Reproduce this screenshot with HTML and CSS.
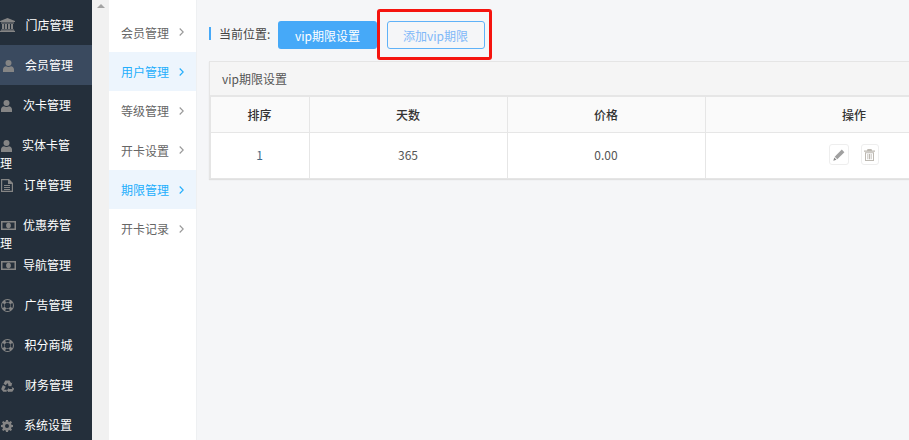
FILE: index.html
```html
<!DOCTYPE html>
<html lang="zh-CN">
<head>
<meta charset="utf-8">
<title>vip期限设置</title>
<link rel="stylesheet" href="styles.css">
</head>
<body>
<svg class="defs" width="0" height="0" aria-hidden="true">
  <symbol id="i-bank" viewBox="0 0 15 14"><path d="M7.500 0 15 3v1H0V3zM1 4.600h13v.9H1zM2 6h2.200v5H2zM5 6h2v5H5zM8 6h2v5H8zM11 6h2v5h-2zM1 11.500h13v1H1zM0 12.800h15V14H0z"/></symbol>
  <symbol id="i-user" viewBox="0 0 11 12"><circle cx="5.500" cy="3" r="3"/><path d="M0 12V9.500C0 7.500 1.500 6.300 3 6.200c.7.500 1.500.8 2.500.8s1.800-.3 2.500-.8c1.500.1 3 1.300 3 3.300V12z"/></symbol>
  <symbol id="i-file" viewBox="0 0 12 13"><path fill-rule="evenodd" d="M0 0h8l4 4v9H0zM1.200 1.200v10.600h9.600V5H7V1.200zM3 6h6v1H3zM3 8h6v1H3zM3 10h6v.9H3z"/></symbol>
  <symbol id="i-money" viewBox="0 0 15 9"><path fill-rule="evenodd" d="M0 0h15v9H0zM1.500 1.500v6h12v-6zM7.500 1.800a2.400 2.700 0 1 1 0 5.400 2.400 2.700 0 0 1 0-5.400z"/></symbol>
  <symbol id="i-ring" viewBox="0 0 14 14"><path fill-rule="evenodd" d="M7 0a7 7 0 1 1 0 14A7 7 0 0 1 7 0zM7 4a3 3 0 1 0 0 6 3 3 0 0 0 0-6zM4.400 1.600 5.500 3.700a3.600 3.600 0 0 1 3 0l1.100-2.100a6 6 0 0 0-5.200 0zM1.600 4.400a6 6 0 0 0 0 5.200l2.100-1.100a3.600 3.600 0 0 1 0-3zM12.400 4.400l-2.100 1.100a3.600 3.600 0 0 1 0 3l2.100 1.100a6 6 0 0 0 0-5.200zM5.500 10.300l-1.100 2.100a6 6 0 0 0 5.200 0l-1.100-2.100a3.600 3.600 0 0 1-3 0z"/></symbol>
  <symbol id="i-recycle" viewBox="0 0 13 12"><path d="M4.300.5h4.200l1.700 2.700 1.100-.6L10.400 6.300 6.700 5.900l1-.6L6.300 2.900 4.900 5.300 2.500 3.800zM1.900 5l2.900 1.700L4.300 7.600 3 9.700h2.700v2H2.200L.4 9.300l-.4.200zM10.700 6.900l2.200 1.300L13 9.300l-1.700 2.400H7.900v1L6 10.200l1.900-2.500v1.400h3.300z"/></symbol>
  <symbol id="i-cog" viewBox="0 0 12 12"><path fill-rule="evenodd" d="M5 0h2l.3 1.600 1 .4L9.700 1 11 2.300l-1 1.400.4 1L12 5v2l-1.600.3-.4 1 1 1.400L9.700 11l-1.400-1-1 .4L7 12H5l-.3-1.600-1-.4-1.400 1L1 9.700l1-1.400-.4-1L0 7V5l1.600-.3.4-1-1-1.400L2.300 1l1.400 1 1-.4zM6 4a2 2 0 1 0 0 4 2 2 0 0 0 0-4z"/></symbol>
  <symbol id="i-chev" viewBox="0 0 5 8"><path d="M.7.500 4.200 4 .7 7.500" fill="none" stroke="currentColor" stroke-width="1.100"/></symbol>
</svg>

<div class="app">
  <nav class="side">
    <a class="side-item"><svg class="ic ic-bank"><use href="#i-bank"/></svg><span class="t t-11">门店管理</span></a>
    <a class="side-item active"><svg class="ic ic-user in-3"><use href="#i-user"/></svg><span class="t t-12">会员管理</span></a>
    <a class="side-item"><svg class="ic ic-user"><use href="#i-user"/></svg><span class="t t-12">次卡管理</span></a>
    <a class="side-item"><svg class="ic ic-user"><use href="#i-user"/></svg><span class="t t-10">实体卡管理</span></a>
    <a class="side-item"><svg class="ic ic-file"><use href="#i-file"/></svg><span class="t t-11">订单管理</span></a>
    <a class="side-item"><svg class="ic ic-money"><use href="#i-money"/></svg><span class="t t-7">优惠券管理</span></a>
    <a class="side-item"><svg class="ic ic-money"><use href="#i-money"/></svg><span class="t t-7">导航管理</span></a>
    <a class="side-item"><svg class="ic ic-ring"><use href="#i-ring"/></svg><span class="t t-11">广告管理</span></a>
    <a class="side-item"><svg class="ic ic-ring"><use href="#i-ring"/></svg><span class="t t-11">积分商城</span></a>
    <a class="side-item"><svg class="ic ic-recycle"><use href="#i-recycle"/></svg><span class="t t-12">财务管理</span></a>
    <a class="side-item"><svg class="ic ic-cog"><use href="#i-cog"/></svg><span class="t t-12">系统设置</span></a>
  </nav>
  <div class="scroll"><span class="scroll-up"></span></div>
  <aside class="sub">
    <a class="sub-item">会员管理<svg class="chev"><use href="#i-chev"/></svg></a>
    <a class="sub-item on">用户管理<svg class="chev"><use href="#i-chev"/></svg></a>
    <a class="sub-item">等级管理<svg class="chev"><use href="#i-chev"/></svg></a>
    <a class="sub-item">开卡设置<svg class="chev"><use href="#i-chev"/></svg></a>
    <a class="sub-item on">期限管理<svg class="chev"><use href="#i-chev"/></svg></a>
    <a class="sub-item">开卡记录<svg class="chev"><use href="#i-chev"/></svg></a>
  </aside>
  <main class="main">
    <div class="crumb">
      <span class="crumb-label">当前位置:</span>
      <a class="btn btn-fill">vip期限设置</a>
      <a class="btn btn-line">添加vip期限</a>
      <span class="mark"></span>
    </div>
    <section class="panel">
      <div class="panel-head">vip期限设置</div>
      <table class="tbl">
        <thead>
          <tr><th class="c1">排序</th><th class="c2">天数</th><th class="c3">价格</th><th class="c4">操作</th></tr>
        </thead>
        <tbody>
          <tr>
            <td class="num">1</td><td>365</td><td>0.00</td>
            <td class="ops">
              <span class="op op-edit"><svg width="12" height="12" viewBox="0 0 12 12"><path fill="#a0a0a0" d="M8.800.6 11.400 3.200 4.300 10.300 1.700 7.700z"/><path fill="#8a8a8a" d="M1.300 8.500 3.500 10.700.3 11.700z"/></svg></span>
              <span class="op op-del"><svg width="11" height="12" viewBox="0 0 11 12"><path fill="#bdb9b2" fill-rule="evenodd" d="M3.500 0h4l.5 1.500h3v1.200H0V1.500h3zM1 3.300h9V12H1zM2 4.300v6.700h7V4.300zM3.400 5h.9v5.200h-.9zM5 5h1v5.200H5zM6.700 5h.9v5.200h-.9z"/></svg></span>
            </td>
          </tr>
        </tbody>
      </table>
    </section>
  </main>
</div>
</body>
</html>
```
FILE: styles.css
```css
* { box-sizing: border-box; }
html, body { margin: 0; height: 100%; overflow: hidden; }
body { font-family: "Noto Sans CJK SC", "Noto Sans", sans-serif; font-size: 12px; background: #f5f6f8; }
.defs { position: absolute; }
.app { display: flex; width: 909px; height: 440px; overflow: hidden; }

.side { flex: 0 0 92px; height: 440px; padding-top: 5px; background: #242f3b; color: #fff; overflow: hidden; }
.side-item { display: block; height: 40px; padding: 11px 12px 0 0; line-height: 17.500px; }
.side-item.active { background: #3a4a5f; }
.ic { display: inline-block; vertical-align: -2px; fill: #858585; }
.ic-bank { width: 15px; height: 14px; }
.ic-user { width: 11px; height: 12px; margin-left: 1px; }
.ic-user.in-3 { margin-left: 3px; }
.ic-file { width: 12px; height: 13px; margin-left: 1px; }
.ic-money { width: 15px; height: 9px; margin-left: 1px; vertical-align: 0; }
.ic-ring { width: 13px; height: 13px; margin-left: 1px; }
.ic-recycle { width: 13px; height: 12px; margin-left: 1px; }
.ic-cog { width: 12px; height: 12px; margin-left: 1px; }
.t-7 { margin-left: 7px; }
.t-10 { margin-left: 10px; }
.t-11 { margin-left: 10.500px; }
.t-12 { margin-left: 11px; }

.scroll { flex: 0 0 17px; background: #f1f1f1; padding: 4px 0 0 5px; }
.scroll-up { display: block; width: 0; height: 0; border: 4px solid transparent; border-top: 0; border-bottom-color: #a3a3a3; }

.sub { flex: 0 0 88px; padding-top: 12.700px; background: #fff; border-right: 1px solid #eef0f2; }
.sub-item { display: flex; align-items: center; justify-content: space-between; height: 39.300px; padding: 0 12px; color: #666; }
.sub-item.on { background: #edf5fd; color: #23aefc; }
.chev { width: 5px; height: 8px; color: #999; }
.sub-item.on .chev { color: #23aefc; }

.main { flex: 1 1 auto; min-width: 0; padding: 21px 0 0 12px; }
.crumb { position: relative; display: flex; align-items: center; height: 28px; }
.crumb::before { content: ""; width: 2px; height: 13px; background: #46a9f8; margin: -4px 8px 0 0; }
.crumb-label { width: 59px; color: #444; margin-top: -4px; }
.btn { display: flex; align-items: center; justify-content: center; width: 99px; height: 28px; border-radius: 3px; }
.btn-fill { background: #46a9f8; color: #fff; }
.btn-line { width: 98px; margin-left: 10px; padding-right: 1px; border: 1px solid #60b2f8; color: #80b8f8; }
.mark { position: absolute; left: 168px; top: -12px; width: 115px; height: 51px; border: 3px solid #f5140f; border-radius: 3px; }

.panel { width: 795px; margin-top: 12px; border: 1px solid #e5e5e5; border-left-width: 2px; border-right: 0; box-shadow: 0 1px 1px #e0e0e0; background: #fff; }
.panel-head { height: 35px; padding-left: 12px; line-height: 33px; background: #f5f5f5; color: #555; border-bottom: 2px solid #e6e6e6; margin-left: -1px; }
.tbl { width: 793px; border-collapse: separate; border-spacing: 0; table-layout: fixed; background: #fff; }
.tbl th, .tbl td { text-align: center; border-right: 1px solid #e6e6e6; padding: 0 1px 0 0; }
.tbl th { height: 36px; background: #fafafa; color: #333; font-weight: 500; border-bottom: 1px solid #e6e6e6; }
.tbl td { height: 45px; padding-bottom: 3px; color: #555; }
.tbl .c1 { width: 99px; }
.tbl .c2, .tbl .c3 { width: 198px; }
.tbl td.num { color: #446a85; }
.tbl .ops { font-size: 0; padding: 0 2px 0 0; }
.op { display: inline-flex; align-items: center; justify-content: center; height: 21px; margin-bottom: 2px; border: 1px solid #eee; border-radius: 3px; background: #fff; }
.op-edit { width: 20px; }
.op-del { width: 18px; margin-left: 12px; }
```
